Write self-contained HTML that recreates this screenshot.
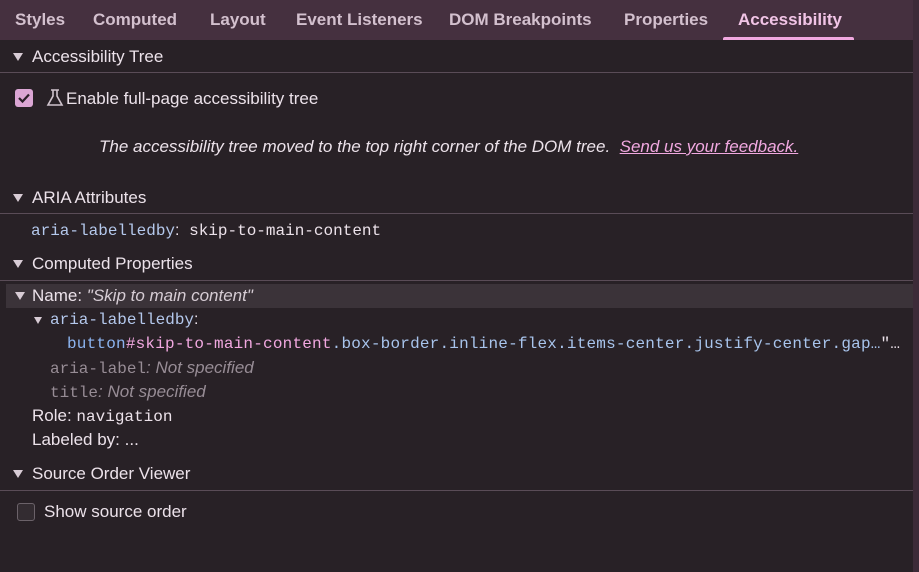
<!DOCTYPE html>
<html><head><style>
body{margin:0;width:919px;height:572px;background:#282126;overflow:hidden;font-family:"Liberation Sans",sans-serif;font-size:17px;color:#ece2ea;position:relative}
.a{position:absolute;white-space:nowrap;line-height:22px}
.m{font-family:"Liberation Mono",monospace;font-size:16px}
.hd{position:absolute;left:0;width:913px;height:40px;top:0;background:#45303f}
.line{position:absolute;left:0;width:913px;height:1px;background:#5a4c57}
.tri{position:absolute;width:0;height:0;border-left:5px solid transparent;border-right:5px solid transparent;border-top:8px solid #d8ccd5}
.tab{position:absolute;top:10px;font-size:17px;font-weight:bold;color:#d3c0ce}
</style></head><body>
<div class="hd"></div>
<div style="position:absolute;left:913px;top:0;width:6px;height:572px;background:#3c2b38"></div>
<div class="tab" style="left:15px">Styles</div>
<div class="tab" style="left:93px">Computed</div>
<div class="tab" style="left:210px">Layout</div>
<div class="tab" style="left:296px">Event Listeners</div>
<div class="tab" style="left:449px">DOM Breakpoints</div>
<div class="tab" style="left:624px">Properties</div>
<div class="tab" style="left:738px;color:#f1c4e6">Accessibility</div>
<div style="position:absolute;left:723px;top:37px;width:131px;height:3px;background:#f1a8e0;border-radius:2px 2px 0 0"></div>

<div class="tri" style="left:13px;top:53px"></div>
<div class="a" style="left:32px;top:46px">Accessibility Tree</div>
<div class="line" style="top:72px"></div>
<div style="position:absolute;left:15px;top:89px;width:18px;height:18px;background:#dba6d4;border-radius:3px"></div>
<svg style="position:absolute;left:15px;top:89px" width="18" height="18"><path d="M4 9l3.5 3.5L14 5.5" stroke="#2a1f28" stroke-width="2.2" fill="none"/></svg>
<svg style="position:absolute;left:45px;top:88px" width="20" height="20"><path d="M6 2h8M8 2v6L3 17h14L12 8V2" stroke="#d0c4cd" stroke-width="1.6" fill="none"/></svg>
<div class="a" style="left:66px;top:88px">Enable full-page accessibility tree</div>
<div class="a" style="left:99px;top:136px;font-style:italic">The accessibility tree moved to the top right corner of the DOM tree. &nbsp;<span style="color:#f1a8e0;text-decoration:underline">Send us your feedback.</span></div>

<div class="tri" style="left:13px;top:194px"></div>
<div class="a" style="left:32px;top:187px">ARIA Attributes</div>
<div class="line" style="top:213px"></div>
<div class="a m" style="left:31px;top:220px"><span style="color:#b4c8ec">aria-labelledby</span><span style="font-family:'Liberation Sans'">:</span> skip-to-main-content</div>

<div class="tri" style="left:13px;top:260px"></div>
<div class="a" style="left:32px;top:253px">Computed Properties</div>
<div class="line" style="top:280px"></div>
<div style="position:absolute;left:6px;top:284px;width:907px;height:24px;background:#3b3339"></div>
<div class="tri" style="left:15px;top:292px"></div>
<div class="a" style="left:32px;top:285px">Name: <i style="color:#d6ccd4">"Skip to main content"</i></div>
<div class="tri" style="left:34px;top:317px;border-left-width:4px;border-right-width:4px;border-top-width:7px"></div>
<div class="a m" style="left:50px;top:309px;color:#b4c8ec">aria-labelledby<span style="font-family:'Liberation Sans';color:#ece2ea">:</span></div>
<div class="a m" style="left:67px;top:333px;letter-spacing:0.2px"><span style="color:#8cb4f0">button</span><span style="color:#f1a8e0">#skip-to-main-content</span><span style="color:#a8c4ec">.box-border.inline-flex.items-center.justify-center.gap…</span>"…</div>
<div class="a m" style="left:50px;top:357px;color:#978c95">aria-label<span style="font-family:'Liberation Sans';font-style:italic;font-size:17px">: Not specified</span></div>
<div class="a m" style="left:50px;top:381px;color:#978c95">title<span style="font-family:'Liberation Sans';font-style:italic;font-size:17px">: Not specified</span></div>
<div class="a" style="left:32px;top:405px">Role: <span class="m">navigation</span></div>
<div class="a" style="left:32px;top:429px">Labeled by: ...</div>

<div class="tri" style="left:13px;top:470px"></div>
<div class="a" style="left:32px;top:463px">Source Order Viewer</div>
<div class="line" style="top:490px"></div>
<div style="position:absolute;left:17px;top:503px;width:16px;height:16px;border:1.5px solid #6b6269;border-radius:3px;background:#332c31"></div>
<div class="a" style="left:44px;top:501px">Show source order</div>
</body></html>
